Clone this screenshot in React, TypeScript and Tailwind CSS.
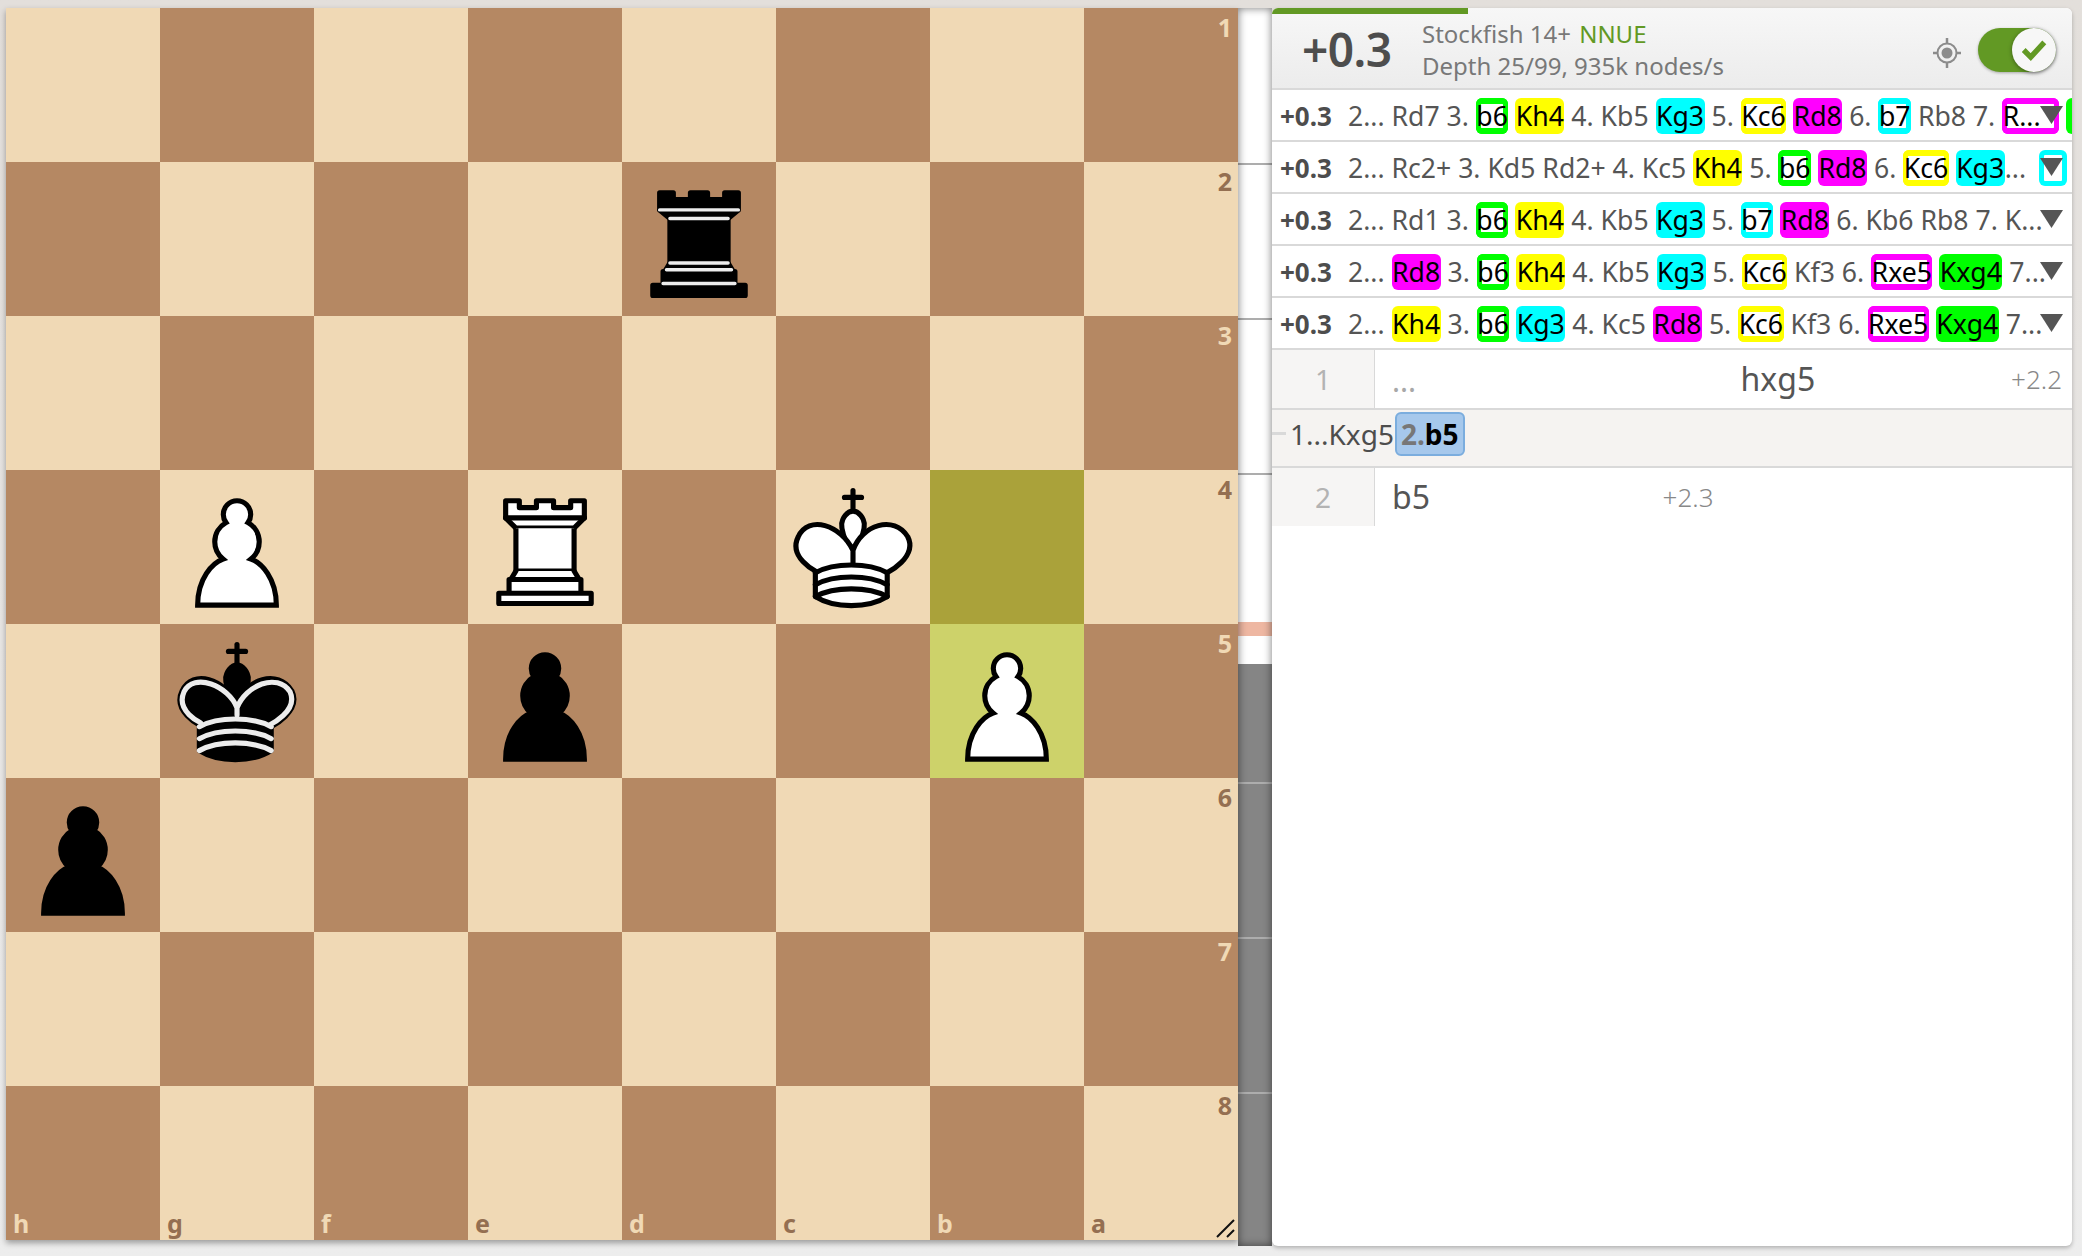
import React from "react";

const PAWN = "M22.5 9c-2.21 0-4 1.79-4 4 0 .89.29 1.71.78 2.38C17.33 16.5 16 18.59 16 21c0 2.03.94 3.84 2.41 5.03-3 1.06-7.41 5.55-7.41 13.47h23c0-7.92-4.41-12.41-7.41-13.47 1.47-1.19 2.41-3 2.41-5.03 0-2.41-1.33-4.5-3.28-5.62.49-.67.78-1.49.78-2.38 0-2.21-1.79-4-4-4z";

function Svg({ children }: { children: React.ReactNode }) {
  return <svg viewBox="0 0 45 45" className="w-full h-full block">{children}</svg>;
}

const Pieces: Record<string, React.ReactNode> = {
  wP: <Svg><path d={PAWN} fill="#fff" stroke="#000" strokeWidth="1.5" strokeLinecap="round" /></Svg>,
  bP: <Svg><path d={PAWN} fill="#000" stroke="#000" strokeWidth="1.5" strokeLinecap="round" /></Svg>,
  wR: (
    <Svg>
      <g fill="#fff" fillRule="evenodd" stroke="#000" strokeWidth="1.5" strokeLinecap="round" strokeLinejoin="round">
        <path d="M9 39h27v-3H9v3zM12 36v-4h21v4H12zM11 14V9h4v2h5V9h5v2h5V9h4v5" strokeLinecap="butt" />
        <path d="M34 14l-3 3H14l-3-3" />
        <path d="M31 17v12.5H14V17" strokeLinecap="butt" strokeLinejoin="miter" />
        <path d="M31 29.5l1.5 2.5h-20l1.5-2.5" />
        <path d="M11 14h23" fill="none" strokeLinejoin="miter" />
      </g>
    </Svg>
  ),
  bR: (
    <Svg>
      <g fillRule="evenodd" stroke="#000" strokeWidth="1.5" strokeLinecap="round" strokeLinejoin="round">
        <path d="M9 39h27v-3H9v3zM12.5 32l1.5-2.5h17l1.5 2.5h-20zM12 36v-4h21v4H12z" strokeLinecap="butt" />
        <path d="M14 29.5v-13h17v13H14z" strokeLinecap="butt" strokeLinejoin="miter" />
        <path d="M14 16.5L11 14h23l-3 2.5H14zM11 14V9h4v2h5V9h5v2h5V9h4v5H11z" strokeLinecap="butt" />
        <path d="M12 35.5h21M13 31.5h19M14 29.5h17M14 16.5h17M11 14h23" fill="none" stroke="#ececec" strokeWidth="1" strokeLinejoin="miter" />
      </g>
    </Svg>
  ),
  wK: (
    <Svg>
      <g fill="none" fillRule="evenodd" stroke="#000" strokeWidth="1.5" strokeLinecap="round" strokeLinejoin="round">
        <path d="M22.5 11.63V6M20 8h5" strokeLinejoin="miter" />
        <path d="M22.5 25s4.5-7.5 3-10.5c0 0-1-2.5-3-2.5s-3 2.5-3 2.5c-1.5 3 3 10.5 3 10.5" fill="#fff" strokeLinecap="butt" strokeLinejoin="miter" />
        <path d="M11.5 37c5.5 3.5 15.5 3.5 21 0v-7s9-4.5 6-10.5c-4-6.5-13.5-3.5-16 4V27v-3.5c-3.5-7.5-13-10.5-16-4-3 6 5 10 5 10V37z" fill="#fff" />
        <path d="M11.5 30c5.5-3 15.5-3 21 0m-21 3.5c5.5-3 15.5-3 21 0m-21 3.5c5.5-3 15.5-3 21 0" />
      </g>
    </Svg>
  ),
  bK: (
    <Svg>
      <g fill="none" fillRule="evenodd" stroke="#000" strokeWidth="1.5" strokeLinecap="round" strokeLinejoin="round">
        <path d="M22.5 11.63V6" strokeLinejoin="miter" />
        <path d="M22.5 25s4.5-7.5 3-10.5c0 0-1-2.5-3-2.5s-3 2.5-3 2.5c-1.5 3 3 10.5 3 10.5" fill="#000" strokeLinecap="butt" strokeLinejoin="miter" />
        <path d="M11.5 37c5.5 3.5 15.5 3.5 21 0v-7s9-4.5 6-10.5c-4-6.5-13.5-3.5-16 4V27v-3.5c-3.5-7.5-13-10.5-16-4-3 6 5 10 5 10V37z" fill="#000" />
        <path d="M20 8h5" strokeLinejoin="miter" />
        <path d="M32 29.5s8.5-4 6.03-9.65C34.15 14 25 18 22.5 24.5l.01 2.1-.01-2.1C20 18 9.906 14 6.997 19.85c-2.497 5.65 4.853 9 4.853 9" stroke="#ececec" />
        <path d="M11.5 30c5.5-3 15.5-3 21 0m-21 3.5c5.5-3 15.5-3 21 0m-21 3.5c5.5-3 15.5-3 21 0" stroke="#ececec" />
      </g>
    </Svg>
  ),
};

const FILES = ["h", "g", "f", "e", "d", "c", "b", "a"];
const PLACED: Record<string, string> = {
  d2: "bR", g4: "wP", e4: "wR", c4: "wK", g5: "bK", e5: "bP", b5: "wP", h6: "bP",
};

function Board() {
  const cells: React.ReactNode[] = [];
  for (let r = 0; r < 8; r++) {
    for (let c = 0; c < 8; c++) {
      const name = FILES[c] + (r + 1);
      const dark = (r + c) % 2 === 1;
      let bg = dark ? "bg-[#b58863]" : "bg-[#f0d9b5]";
      if (name === "b4") bg = "bg-[#aaa23a]";
      if (name === "b5") bg = "bg-[#cdd26a]";
      const coord = dark ? "text-[#f0d9b5]" : "text-[#946f51]";
      cells.push(
        <div key={name} className={`relative ${bg}`}>
          {PLACED[name] && Pieces[PLACED[name]]}
          {c === 7 && (
            <span className={`absolute right-[6px] top-[3px] text-[25px] leading-[32px] font-bold ${coord}`}>{r + 1}</span>
          )}
          {r === 7 && (
            <span className={`absolute left-[7px] bottom-[1px] text-[25px] leading-[32px] font-bold ${coord}`}>{FILES[c]}</span>
          )}
        </div>
      );
    }
  }
  return (
    <div className="relative grid grid-cols-[repeat(8,154px)] grid-rows-[repeat(8,154px)] w-[1232px] h-[1232px] shrink-0 shadow-[0_3px_6px_rgba(0,0,0,0.35)]">
      {cells}
      <svg viewBox="0 0 20 20" className="absolute right-[2px] bottom-[2px] w-[20px] h-[20px]">
        <path d="M1 19L18 2M11 19L18 12" stroke="#111" strokeWidth="2" fill="none" />
      </svg>
    </div>
  );
}

function Gauge() {
  const ticks = [155, 310, 465, 620, 774, 929, 1084];
  return (
    <div className="relative w-[34px] h-[1238px] shrink-0 bg-white overflow-hidden">
      <div className="absolute left-0 right-0 top-[656px] bottom-0 bg-[#858585]" />
      {ticks.map((t) => (
        <div key={t} className="absolute left-0 right-0 h-[2px] bg-[#adadad]" style={{ top: t }} />
      ))}
      <div className="absolute left-0 right-0 top-[614px] h-[14px] bg-[#eeb7a2]" />
      <div className="absolute inset-0 shadow-[inset_0_0_8px_rgba(0,0,0,0.55)]" />
    </div>
  );
}

type Kind = "yf" | "cf" | "mf" | "gf" | "yb" | "cb" | "mb" | "gb";
const KIND: Record<Kind, string> = {
  yf: "bg-[#ffff00]",
  cf: "bg-[#00ffff]",
  mf: "bg-[#ff00ff]",
  gf: "bg-[#00ff00]",
  yb: "bg-white shadow-[inset_5px_0_0_#ffff00,inset_-5px_0_0_#ffff00,inset_0_6px_0_#ffff00,inset_0_-6px_0_#ffff00]",
  cb: "bg-white shadow-[inset_5px_0_0_#00ffff,inset_-5px_0_0_#00ffff,inset_0_6px_0_#00ffff,inset_0_-6px_0_#00ffff]",
  mb: "bg-white shadow-[inset_5px_0_0_#ff00ff,inset_-5px_0_0_#ff00ff,inset_0_6px_0_#ff00ff,inset_0_-6px_0_#ff00ff]",
  gb: "bg-white shadow-[inset_5px_0_0_#00ff00,inset_-5px_0_0_#00ff00,inset_0_6px_0_#00ff00,inset_0_-6px_0_#00ff00]",
};

function C({ k, children }: { k: Kind; children?: React.ReactNode }) {
  return (
    <span className={`inline-block h-[36px] leading-[36px] align-top rounded-[6px] px-[0.5px] text-black ${KIND[k]}`}>{children}</span>
  );
}

function Tri() {
  return (
    <svg viewBox="0 0 23 18" className="w-[23px] h-[18px] block">
      <polygon points="0,0 23,0 11.5,18" fill="#555555" />
    </svg>
  );
}

function PvRow({ children, cyan }: { children: React.ReactNode; cyan?: boolean }) {
  return (
    <div className="relative h-[52px] border-b-2 border-[#d9d9d9] bg-white overflow-hidden whitespace-nowrap pl-[8px] pt-[8px] text-[26.6px] leading-[36px] text-[#555555]">
      <strong className="inline-block w-[68px] text-[#4d4d4d] text-[26px]">+0.3</strong>
      {children}
      {cyan && <span className="absolute left-[767px] top-[8px] w-[28px] h-[36px] rounded-[6px] bg-white shadow-[inset_0_0_0_5px_#00ffff]" />}
      <div className="absolute left-[768px] top-[16px]">
        <Tri />
      </div>
    </div>
  );
}

function Engine() {
  return (
    <>
      <div className="relative h-[82px] border-b-2 border-[#d9d9d9] bg-gradient-to-b from-[#f7f7f7] to-[#ececec] flex items-center">
        <div className="absolute left-0 top-0 h-[6px] w-[196px] bg-[#629924]" />
        <div className="w-[150px] mt-[2px] pl-[30px] text-[46px] leading-none font-semibold text-[#4d4d4d] tracking-[-0.5px]">+0.3</div>
        <div className="flex-1 mt-[3px] text-[24px] leading-[32px] text-[#787878]">
          <div>
            Stockfish 14+ <span className="ml-[2px] text-[#629924]">NNUE</span>
          </div>
          <div>Depth 25/99, 935k nodes/s</div>
        </div>
        <svg viewBox="0 0 30 32" className="w-[30px] h-[32px] mr-[16px] mt-[9px]">
          <circle cx="15" cy="16" r="9.5" fill="none" stroke="#8c8c8c" strokeWidth="2" />
          <circle cx="15" cy="16" r="5.5" fill="#8c8c8c" />
          <path d="M15 1v6M15 25v6M1 16h5M24 16h5" stroke="#8c8c8c" strokeWidth="2.5" />
        </svg>
        <div className="relative w-[78px] h-[44px] mr-[16px] mt-[4px] rounded-full bg-[#629924] shadow-[0_1px_3px_rgba(0,0,0,0.3)]">
          <div className="absolute right-0 top-0 w-[44px] h-[44px] rounded-full bg-[#f7f7f7] shadow-[0_1px_4px_rgba(0,0,0,0.4)] flex items-center justify-center">
            <svg viewBox="0 0 24 24" className="w-[26px] h-[26px]">
              <path d="M2.5 12l6.5 6.5L21.5 5" fill="none" stroke="#629924" strokeWidth="5" />
            </svg>
          </div>
        </div>
      </div>
      <PvRow>
        2... Rd7 3. <C k="gb">b6</C> <C k="yf">Kh4</C> 4. Kb5 <C k="cf">Kg3</C> 5. <C k="yb">Kc6</C> <C k="mf">Rd8</C> 6. <C k="cb">b7</C> Rb8 7. <C k="mb"><span className="inline-block w-[56px]">R...</span></C> <C k="gf"><span className="inline-block w-[60px]" /></C>
      </PvRow>
      <PvRow cyan>
        2... Rc2+ 3. Kd5 Rd2+ 4. Kc5 <C k="yf">Kh4</C> 5. <C k="gb">b6</C> <C k="mf">Rd8</C> 6. <C k="yb">Kc6</C> <C k="cf">Kg3</C>...
      </PvRow>
      <PvRow>
        2... Rd1 3. <C k="gb">b6</C> <C k="yf">Kh4</C> 4. Kb5 <C k="cf">Kg3</C> 5. <C k="cb">b7</C> <C k="mf">Rd8</C> 6. Kb6 Rb8 7. K...
      </PvRow>
      <PvRow>
        2... <C k="mf">Rd8</C> 3. <C k="gb">b6</C> <C k="yf">Kh4</C> 4. Kb5 <C k="cf">Kg3</C> 5. <C k="yb">Kc6</C> Kf3 6. <C k="mb">Rxe5</C> <C k="gf">Kxg4</C> 7...
      </PvRow>
      <PvRow>
        2... <C k="yf">Kh4</C> 3. <C k="gb">b6</C> <C k="cf">Kg3</C> 4. Kc5 <C k="mf">Rd8</C> 5. <C k="yb">Kc6</C> Kf3 6. <C k="mb">Rxe5</C> <C k="gf">Kxg4</C> 7...
      </PvRow>
    </>
  );
}

function Moves() {
  return (
    <>
      <div className="grid grid-cols-[103px_348.5px_348.5px] h-[60px] border-b-2 border-[#d9d9d9]">
        <div className="bg-[#f6f5f4] border-r border-[#d9d9d9] flex items-center justify-center text-[28px] text-[#b3b3b3]">1</div>
        <div className="pl-[17px] pt-[15px] text-[30px] leading-[32px] text-[#a8a8a8]">...</div>
        <div className="flex items-center justify-between pl-[17px] pr-[10px] text-[#555555]">
          <span className="text-[32px] leading-[40px]">hxg5</span>
          <span className="text-[26px] leading-[32px] text-[#888888] font-light">+2.2</span>
        </div>
      </div>
      <div className="relative h-[58px] bg-[#f5f3f1] border-b-2 border-[#d9d9d9] flex items-start pl-[18px] pt-[2px] text-[28px]">
        <div className="absolute left-0 top-[22px] w-[14px] h-[3px] bg-[#d9d9d9]" />
        <span className="leading-[44px] text-[#4d4d4d]">1...Kxg5</span>
        <span className="ml-[1px] h-[44px] leading-[40px] px-[4px] rounded-[6px] bg-[#a6c8ec] border-2 border-[#7badde] font-bold text-black">
          <span className="text-[#777777]">2.</span>b5
        </span>
      </div>
      <div className="grid grid-cols-[103px_348.5px_348.5px] h-[58px]">
        <div className="bg-[#f6f5f4] border-r border-[#d9d9d9] flex items-center justify-center text-[28px] text-[#b3b3b3]">2</div>
        <div className="flex items-center justify-between pl-[17px] pr-[10px] text-[#555555]">
          <span className="text-[32px] leading-[40px]">b5</span>
          <span className="text-[26px] leading-[32px] text-[#888888] font-light">+2.3</span>
        </div>
      </div>
    </>
  );
}

export default function App() {
  return (
    <div className="w-[2082px] h-[1256px] overflow-hidden bg-gradient-to-b from-[#e3dfdb] to-[#ededed] pl-[6px] pt-[8px] flex items-start font-['Noto_Sans',sans-serif]">
      <Board />
      <Gauge />
      <div className="w-[800px] h-[1238px] shrink-0 bg-white rounded-[6px] overflow-hidden shadow-[0_2px_4px_rgba(0,0,0,0.25)]">
        <Engine />
        <Moves />
      </div>
    </div>
  );
}
